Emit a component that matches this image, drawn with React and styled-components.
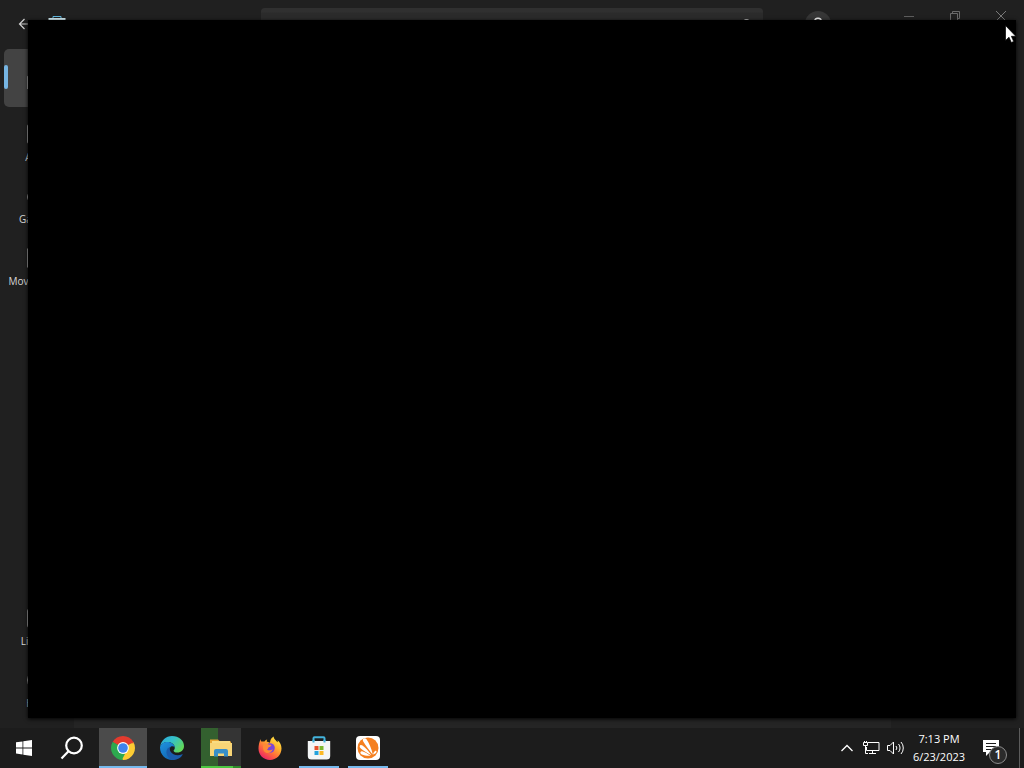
import React from "react";
import styled, { createGlobalStyle } from "styled-components";

const GlobalStyle = createGlobalStyle`
    * {
        box-sizing: border-box;
    }
    body {
        margin: 0;
        background: #1f1f1f;
        color: #fff;
        font-family: "Open Sans", "Noto Sans", sans-serif;
    }
    button {
        padding: 0;
        border: none;
        background: transparent;
        color: inherit;
        font-family: inherit;
        cursor: default;
    }
`;

const Desktop = styled.div`
    position: relative;
    display: flex;
    flex-direction: column;
    height: 100vh;
    overflow: hidden;
`;

/* store window */

const StoreWindow = styled.div`
    flex: 1;
    min-height: 0;
    display: flex;
    flex-direction: column;
    background: #202020;
`;

const TitleBar = styled.header`
    display: grid;
    grid-template-columns: 1fr 49% 1fr;
    align-items: center;
    height: 48px;
    flex-shrink: 0;
`;

const TitleLeft = styled.div`
    display: flex;
    align-items: center;
    gap: 16px;
    padding-left: 16px;
`;

const IconButton = styled.button`
    display: flex;
    align-items: center;
    justify-content: center;
    width: 16px;
    height: 32px;
`;

const SearchBox = styled.label`
    display: flex;
    align-items: center;
    height: 32px;
    padding-right: 10px;
    border-radius: 4px;
    background: linear-gradient(#303030 4px, #2b2b2b 5px);

    input {
        flex: 1;
        min-width: 0;
        border: none;
        outline: none;
        background: transparent;
        color: #fff;
    }
`;

const TitleRight = styled.div`
    display: flex;
    align-self: stretch;
    justify-content: space-between;
    padding-left: 42px;
`;

const Avatar = styled.button`
    align-self: center;
    display: flex;
    align-items: center;
    justify-content: center;
    width: 26px;
    height: 26px;
    border-radius: 50%;
    background: #363636;
`;

const WindowControls = styled.div`
    display: flex;

    button {
        width: 46px;
        height: 32px;
    }
`;

const StoreBody = styled.div`
    flex: 1;
    min-height: 0;
    display: flex;
`;

const SideNav = styled.nav`
    display: flex;
    flex-direction: column;
    gap: 4px;
    width: 74px;
    padding: 1px 4px 13px;
`;

const NavItem = styled.button`
    position: relative;
    display: flex;
    flex-direction: column;
    align-items: center;
    gap: 6px;
    height: 58px;
    padding-top: ${(props) => (props.$active ? "20px" : "13px")};
    margin-top: ${(props) => (props.$last ? "auto" : "0")};
    border-radius: 5px;
    background: ${(props) => (props.$active ? "#434343" : "transparent")};
    color: #d6d6d6;
    font-size: 10px;
    line-height: 14px;
    white-space: nowrap;
`;

const ActiveMark = styled.span`
    position: absolute;
    left: 0;
    top: 16px;
    width: 4px;
    height: 24px;
    border-radius: 2px;
    background: #76b5e3;
`;

const StoreContent = styled.main`
    flex: 1;
    display: flex;
    align-items: flex-end;
`;

const ContentPane = styled.div`
    width: 86%;
    height: 100%;
    background: #252525;
`;

/* blank window in front of the store */

const BlankWindow = styled.section`
    position: absolute;
    top: 20px;
    right: 8px;
    bottom: 50px;
    left: 28px;
    background: #000;
    box-shadow: 0 1px 4px #000;
`;

const Cursor = styled.svg`
    position: absolute;
    top: 25px;
    right: 8px;
`;

/* taskbar */

const Taskbar = styled.footer`
    position: relative;
    display: flex;
    justify-content: space-between;
    height: 40px;
    flex-shrink: 0;
    background: #1c1c1c;
`;

const TaskGroup = styled.div`
    display: flex;
`;

const Apps = styled.div`
    display: flex;
    gap: 1px;
    padding-left: 3px;
`;

const TaskButton = styled.button`
    display: flex;
    align-items: center;
    justify-content: center;
    width: 48px;
    height: 40px;
`;

const AppButton = styled(TaskButton)`
    width: ${(props) => (props.$state === "active" ? "48px" : "40px")};
    margin: ${(props) => (props.$state === "active" ? "0" : "0 4px")};
    padding-top: 2px;
    border-bottom: 2px solid
        ${(props) => (props.$state === "active" || props.$state === "open" ? "#76b9ed" : "transparent")};
    background: ${(props) => (props.$state === "active" ? "#4b4b4b" : "transparent")};

    ${(props) =>
        props.$state === "progress" &&
        `
        padding-bottom: 2px;
        border-bottom: none;
        background:
            linear-gradient(90deg, #4cc742 32px, #2f8a2b 32px) bottom / 100% 2px no-repeat,
            linear-gradient(90deg, #33602f 17px, #343434 17px);
    `}
`;

const Tray = styled.div`
    display: flex;
    align-items: center;
`;

const TrayButton = styled.button`
    display: flex;
    align-items: center;
    justify-content: center;
    width: 24px;
    height: 40px;
`;

const Clock = styled.button`
    width: 64px;
    height: 40px;
    font-size: 11px;
    line-height: 18px;
    text-align: center;

    time {
        display: block;
    }
`;

const Notifications = styled.button`
    position: relative;
    display: flex;
    align-items: center;
    justify-content: center;
    width: 40px;
    height: 40px;
`;

const Badge = styled.span`
    position: absolute;
    right: 4px;
    bottom: 4px;
    width: 18px;
    height: 18px;
    border: 1px solid #8c8c8c;
    border-radius: 50%;
    background: #2b2b2b;
    font-size: 12px;
    font-weight: 600;
    line-height: 16px;
    text-align: center;
`;

const ShowDesktop = styled.button`
    width: 5px;
    height: 40px;
    margin-left: 8px;
    border-left: 1px solid #5c5c5c;
`;

const navIcons = {
    home: <path d="M0.500 7L9 1l8.500 6v10.500h-17z" />,
    apps: <rect x="0.5" y="0.5" width="17" height="17" rx="2" />,
    gaming: <path d="M5.500 5h7a5 5 0 0 1 0 10h-7a5 5 0 0 1 0-10zM5 8v4M3 10h4M12 9v2" />,
    movies: <path d="M0.500 1h17v16h-17zM4 1v16M14 1v16" />,
    library: <path d="M3 0.500h12a2.500 2.500 0 0 1 2.500 2.500v12a2.500 2.500 0 0 1-2.500 2.500H3A2.500 2.500 0 0 1 0.500 15V3A2.500 2.500 0 0 1 3 0.500zM6 5v8M9 5v8" />,
    help: <path d="M9 0.500a8.500 8.500 0 1 1 0 17 8.500 8.500 0 0 1 0-17zM6.500 7a2.500 2.500 0 1 1 2.500 3v1M9 13v1" />,
};

const navItems = [
    { icon: "home", active: true },
    { icon: "apps", label: "Apps" },
    { icon: "gaming", label: "Gaming" },
    { icon: "movies", label: "Movies & TV" },
    { icon: "library", label: "Library", last: true },
    { icon: "help", label: "Help" },
];

const WindowsLogo = () => (
    <svg width="16" height="16" viewBox="0 0 16 16" fill="#fff">
        <path d="M0 2.300l6.500-.9v6.100H0zM7.300 1.300L16 0v7.500H7.300zM0 8.400h6.500v6.100L0 13.600zM7.300 8.400H16V16l-8.700-1.300z" />
    </svg>
);

const SearchIcon = () => (
    <svg width="24" height="24" viewBox="0 0 24 24" fill="none" stroke="#fff" strokeWidth="2.200">
        <circle cx="14" cy="9.500" r="7.800" />
        <path d="M8.500 15.200L1.500 22.500" />
    </svg>
);

const ChromeIcon = () => (
    <svg width="24" height="24" viewBox="0 0 24 24">
        <path d="M12 12L1.610 6A12 12 0 0 1 22.390 6z" fill="#e33b2e" />
        <path d="M12 12L1.610 6A12 12 0 0 0 12 24z" fill="#2da94f" />
        <path d="M12 12L22.390 6A12 12 0 0 1 12 24z" fill="#fdcc33" />
        <path d="M12 6.300h10.500l.2 1H12z" fill="#e33b2e" />
        <path d="M16.900 14.800L12 24 8 16z" fill="#fdcc33" />
        <path d="M8 15l6 3-3.200 6A12 12 0 0 1 5 20z" fill="#2da94f" />
        <path d="M1.610 6l5.500 9L12 12z" fill="#2da94f" />
        <circle cx="12" cy="12" r="5.900" fill="#fff" />
        <circle cx="12" cy="12" r="4.800" fill="#3f83ee" />
    </svg>
);

const EdgeIcon = () => (
    <svg width="24" height="24" viewBox="0 0 24 24">
        <defs>
            <linearGradient id="edgeTop" x1="0" y1="0" x2="1" y2="0.600">
                <stop offset="0" stopColor="#2aa5dd" />
                <stop offset="0.500" stopColor="#35c1c9" />
                <stop offset="1" stopColor="#62d85a" />
            </linearGradient>
            <linearGradient id="edgeLeft" x1="0" y1="0" x2="0.600" y2="1">
                <stop offset="0" stopColor="#1f94e0" />
                <stop offset="1" stopColor="#1266b4" />
            </linearGradient>
        </defs>
        <path d="M0 11C1 4.500 6 0 12 0c7 0 12 4.500 12 10 0 4-3 6.500-6.600 6.500-2.700 0-3.800-1-3.800-1.800 0-.6 1.200-1.200 1.200-3C14.800 8.500 11.500 6 8 6c-4 0-7 2-8 5z" fill="url(#edgeTop)" />
        <path d="M0 11.500C.5 8 4 6 7.500 6c4 0 7.200 2.500 7.300 5.500-1-1.200-2.500-1.500-4-.8-2.500 1.200-3 4-1.500 7 1.200 2.500 3.500 4.500 6.500 5.600C8 26 0 20 0 11.500z" fill="url(#edgeLeft)" />
        <path d="M10.800 10.700c-3 .5-4.600 3-4.400 5.800.3 3.500 3.100 6.800 6.600 7.500 4 .1 7.600-2 9.600-5.300.2-.4-.1-.6-.5-.4-4.600 2.300-9.600.6-11.600-2.800-1.100-1.900-.9-3.600.3-4.800z" fill="#1a5cab" />
    </svg>
);

const FolderIcon = () => (
    <svg width="24" height="20" viewBox="0 0 24 20">
        <path d="M1 1.500h8l2 2h11v4H1z" fill="#e8a634" />
        <path d="M3 3h18v4H3z" fill="#f9dc83" />
        <path d="M1 5h22v13H1z" fill="#f8d577" />
        <path d="M5 18.500v-5.500a2 2 0 0 1 2-2h10a2 2 0 0 1 2 2v5.500h-4v-3H9v3z" fill="#398fc9" />
    </svg>
);

const FirefoxIcon = () => (
    <svg width="24" height="24" viewBox="0 0 24 24">
        <defs>
            <linearGradient id="foxBody" x1="0.900" y1="0" x2="0.200" y2="1">
                <stop offset="0" stopColor="#fff14f" />
                <stop offset="0.350" stopColor="#ffb52e" />
                <stop offset="0.650" stopColor="#ff6a3c" />
                <stop offset="1" stopColor="#e9186c" />
            </linearGradient>
        </defs>
        <path d="M2.600 3c0 1.200.3 2 .7 2.600l3.200-.2c.6-1 1.600-1.700 2.700-2-.5.800-.6 1.500-.5 2.100L12 6.800c.2-2.800 1.200-5 3.600-6.300.1 2.300 1.800 3.400 3.200 5l1 .8c0-.8-.1-1.500-.3-2.100C22 6 23.500 9 23.500 12.500 23.500 19 18.300 24 12 24 5.500 24 .5 19 .5 12.800.5 9 1.200 6.300 2.600 3z" fill="url(#foxBody)" />
        <circle cx="12" cy="12" r="4.800" fill="#7b45d8" />
        <path d="M5.500 8c1.600-.8 3.400-.6 4.500.2 1 .6 2.500.3 3.400.7-.1 1.200-1.700 1.700-2.700 2.400-.7.600-.5 1.900-1.700 2.200 1.800 1.700 4.500.3 5.800-.2-1 2.700-4 4.300-6.600 3.500C5.400 15.800 4.300 12 5.500 8z" fill="#ff8a36" />
    </svg>
);

const StoreIcon = () => (
    <svg width="24" height="24" viewBox="0 0 24 24">
        <path d="M6.500 6V2.300a1 1 0 0 1 1-1h9a1 1 0 0 1 1 1V6" fill="none" stroke="#43b3dc" strokeWidth="2" />
        <path d="M.8 5h22.400v15a3.500 3.500 0 0 1-3.500 3.500H4.300A3.500 3.500 0 0 1 .8 20z" fill="#f3f5f6" />
        <path d="M5.500 4h2v2.500h-2zM16.500 4h2v2.500h-2z" fill="#43b3dc" />
        <path d="M7.500 10h4v4h-4z" fill="#e5512c" />
        <path d="M12.500 10h4v4h-4z" fill="#7cb82f" />
        <path d="M7.500 15h4v4h-4z" fill="#23a2dd" />
        <path d="M12.500 15h4v4h-4z" fill="#fcb924" />
    </svg>
);

const AvastIcon = () => (
    <svg width="24" height="24" viewBox="0 0 24 24">
        <rect width="24" height="24" rx="4" fill="#fff" />
        <circle cx="12" cy="12" r="10.500" fill="#f58020" />
        <g fill="#fff">
            <path d="M7.300 2.800c1-.9 2.400-.6 3.200.5 2.500 3.500 5 9 6.300 15.500C13.500 14.500 9.500 9.500 7.400 5.800c-.6-1-.8-2.200-.1-3z" />
            <path d="M4 9.500c.6-.7 1.600-.6 2.500.1 3.200 2.600 6.300 5.800 9 9.700-3.800-2-8-4.500-10.700-6.900-1-.9-1.500-2.100-.8-2.900z" />
            <path d="M4.500 16c.4-.7 1.300-.8 2.200-.5 2.700.9 5.300 2.300 7.800 4.300-3.300.2-6.300-.2-8.700-1.300-1.200-.6-1.700-1.700-1.300-2.500z" />
            <path d="M17 18.500c.4-1.500.9-2.700 2.100-3.500.8-.4 1.600.2 1.400 1.100-.3 1.200-1.800 1.900-3.500 2.400z" />
        </g>
    </svg>
);

const apps = [
    { name: "Google Chrome", state: "active", Icon: ChromeIcon },
    { name: "Microsoft Edge", Icon: EdgeIcon },
    { name: "File Explorer", state: "progress", Icon: FolderIcon },
    { name: "Firefox", Icon: FirefoxIcon },
    { name: "Microsoft Store", state: "open", Icon: StoreIcon },
    { name: "Avast", state: "open", Icon: AvastIcon },
];

const Store = () => {
    return (
        <StoreWindow>
            <TitleBar>
                <TitleLeft>
                    <IconButton aria-label="Back">
                        <svg width="12" height="12" viewBox="0 0 12 12" fill="none" stroke="#d0d0d0" strokeWidth="1.200">
                            <path d="M6.500 1L1.500 6l5 5M1.500 6H12" />
                        </svg>
                    </IconButton>
                    <svg width="18" height="18" viewBox="0 0 18 18">
                        <path d="M5 4V1.500h8V4" fill="none" stroke="#5fb6dd" />
                        <path d="M0.500 3h17v12a2 2 0 0 1-2 2h-13a2 2 0 0 1-2-2z" fill="#d4edf5" />
                    </svg>
                </TitleLeft>
                <SearchBox>
                    <input type="text" aria-label="Search" />
                    <svg width="12" height="12" viewBox="0 0 12 12" fill="none" stroke="#e0e0e0">
                        <circle cx="5.500" cy="5.500" r="4" />
                        <path d="M8.500 8.500l3 3" />
                    </svg>
                </SearchBox>
                <TitleRight>
                    <Avatar aria-label="Account">
                        <svg width="14" height="14" viewBox="0 0 14 14" fill="none" stroke="#f0f0f0" strokeWidth="1.500">
                            <circle cx="7" cy="4.500" r="3.300" />
                            <path d="M1.500 13c0-5 11-5 11 0" />
                        </svg>
                    </Avatar>
                    <WindowControls>
                        <button aria-label="Minimize">
                            <svg width="10" height="10" viewBox="0 0 10 10" stroke="#5e5e5e">
                                <path d="M0 5.500h10" />
                            </svg>
                        </button>
                        <button aria-label="Restore">
                            <svg width="10" height="10" viewBox="0 0 10 10" fill="none" stroke="#6a6a6a">
                                <path d="M0.500 2.500h7v7h-7zM2.500 2.500v-2h7v7h-2" />
                            </svg>
                        </button>
                        <button aria-label="Close">
                            <svg width="10" height="10" viewBox="0 0 10 10" stroke="#7a7a7a">
                                <path d="M0 0l10 10M10 0L0 10" />
                            </svg>
                        </button>
                    </WindowControls>
                </TitleRight>
            </TitleBar>
            <StoreBody>
                <SideNav>
                    {navItems.map((item) => (
                        <NavItem key={item.icon} $active={item.active} $last={item.last} aria-label={item.label || "Home"}>
                            {item.active && <ActiveMark />}
                            <svg width="20" height="20" viewBox="0 0 18 18" fill="none" stroke="#a8a8a8">
                                {navIcons[item.icon]}
                            </svg>
                            {item.label}
                        </NavItem>
                    ))}
                </SideNav>
                <StoreContent>
                    <ContentPane />
                </StoreContent>
            </StoreBody>
        </StoreWindow>
    );
};

const App = () => {
    return (
        <>
            <GlobalStyle />
            <Desktop>
                <Store />
                <BlankWindow />
                <Taskbar>
                    <TaskGroup>
                        <TaskButton aria-label="Start">
                            <WindowsLogo />
                        </TaskButton>
                        <TaskButton aria-label="Search">
                            <SearchIcon />
                        </TaskButton>
                        <Apps>
                            {apps.map(({ name, state, Icon }) => (
                                <AppButton key={name} $state={state} aria-label={name}>
                                    <Icon />
                                </AppButton>
                            ))}
                        </Apps>
                    </TaskGroup>
                    <Tray>
                        <TrayButton aria-label="Show hidden icons">
                            <svg width="12" height="8" viewBox="0 0 12 8" fill="none" stroke="#fff" strokeWidth="1.300">
                                <path d="M0.500 7L6 1.500 11.500 7" />
                            </svg>
                        </TrayButton>
                        <TrayButton aria-label="Network">
                            <svg width="18" height="16" viewBox="0 0 18 16" fill="none" stroke="#fff">
                                <path d="M6 2.500h11v8H4.500V7M10.500 10.500v3M7 13.500h7M1.500 2.500h4v3h-4zM3.500 5.500v8H6M2.500 1v1.500M4.500 1v1.500" />
                            </svg>
                        </TrayButton>
                        <TrayButton aria-label="Volume">
                            <svg width="17" height="16" viewBox="0 0 17 16" fill="none" stroke="#fff">
                                <path d="M0.500 5.500H3L6.500 2v12L3 10.500H0.500zM9 6a3 3 0 0 1 0 4M11.500 4a6 6 0 0 1 0 8M14 2a9 9 0 0 1 0 12" />
                            </svg>
                        </TrayButton>
                        <Clock>
                            <time>7:13 PM</time>
                            <time>6/23/2023</time>
                        </Clock>
                        <Notifications aria-label="Notifications">
                            <svg width="16" height="16" viewBox="0 0 16 16">
                                <path d="M0 0h16v12H7l-4 4v-4H0z" fill="#fff" />
                                <path d="M3 3.500h10M3 6.500h10M3 9.500h7" stroke="#1c1c1c" />
                            </svg>
                            <Badge>1</Badge>
                        </Notifications>
                        <ShowDesktop aria-label="Show desktop" />
                    </Tray>
                </Taskbar>
                <Cursor width="11" height="19" viewBox="0 0 11 19">
                    <path d="M0.500 0.500v15l3.500-3.300 2.300 5.300 2.400-1-2.300-5.200h4.400z" fill="#fff" stroke="#000" strokeWidth="0.700" />
                </Cursor>
            </Desktop>
        </>
    );
};

export default App;
